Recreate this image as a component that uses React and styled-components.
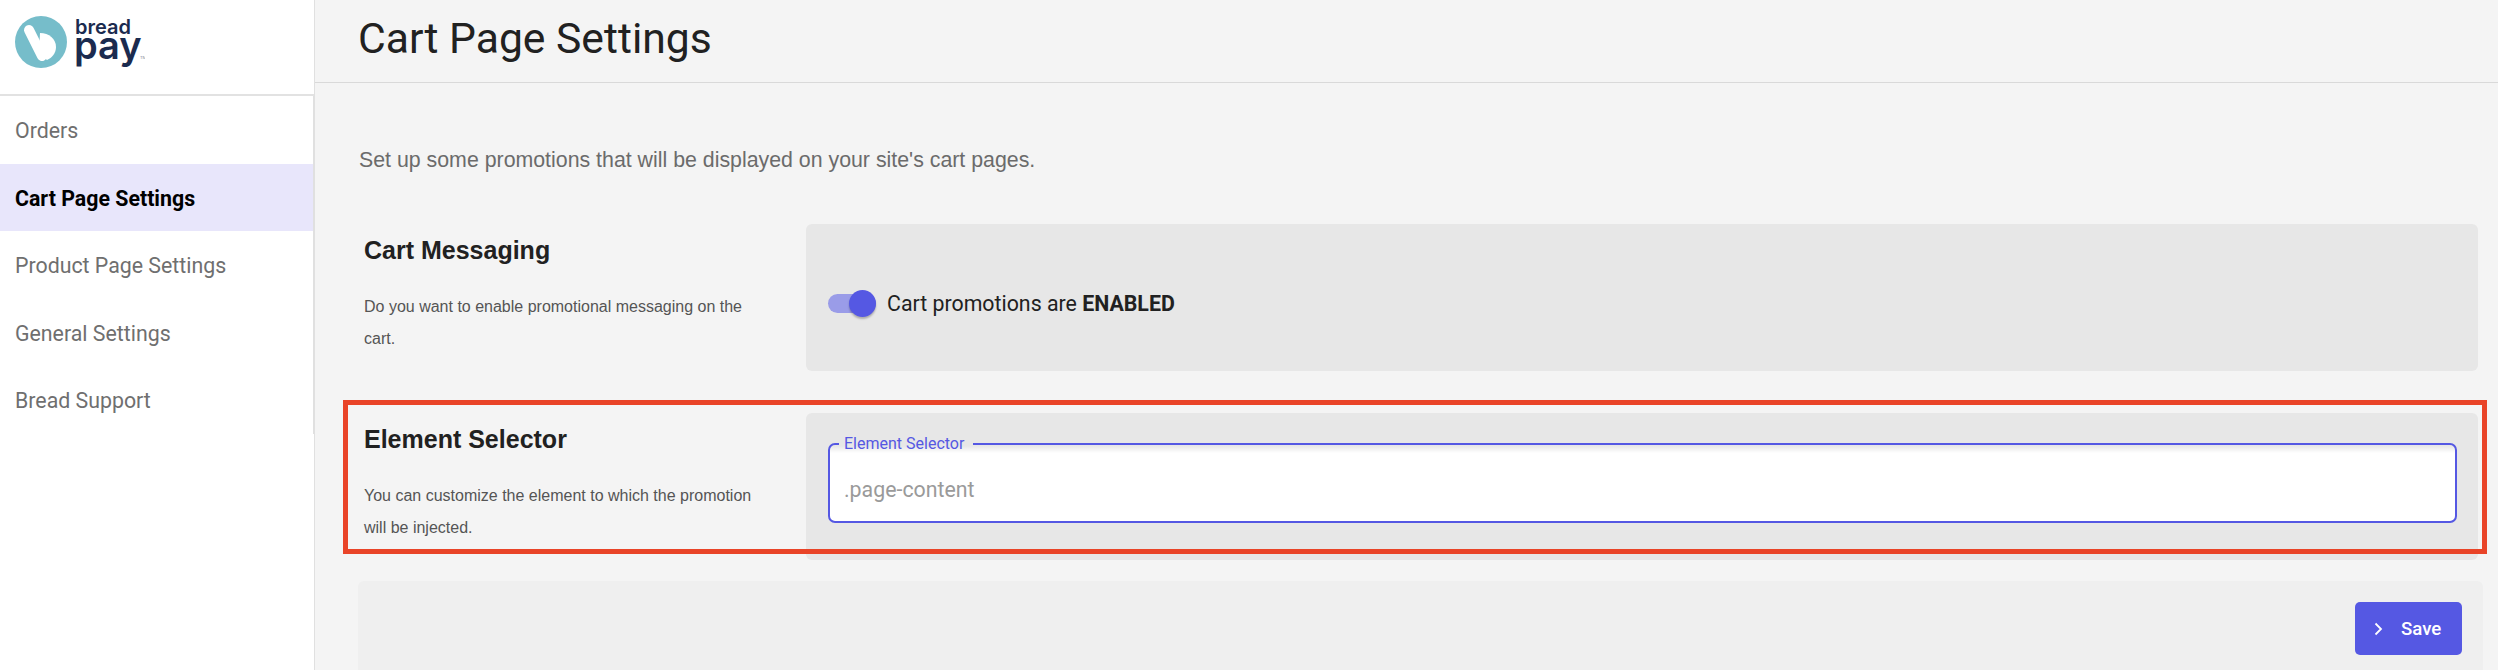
import React from 'react';
import styled, { createGlobalStyle } from 'styled-components';

const GlobalStyle = createGlobalStyle`
  html, body {
    margin: 0;
    padding: 0;
    background: #f4f4f4;
  }
  * {
    box-sizing: border-box;
  }
`;

const Page = styled.div`
  display: flex;
  width: 2498px;
  height: 670px;
  overflow: hidden;
  background: #f4f4f4;
`;

const Sidebar = styled.aside`
  flex: 0 0 315px;
  background: #fff;
  border-right: 1px solid #e0e0e0;
`;

const LogoBox = styled.div`
  height: 96px;
  padding: 16px 0 0 15px;
  border-bottom: 2px solid #e2e2e2;
`;

const Nav = styled.nav`
  height: 338px;
  border-right: 1px solid #e0e0e0;
`;

const NavItem = styled.div`
  display: flex;
  align-items: center;
  height: 67.6px;
  padding: ${p => (p.$active ? '3px' : '1px')} 0 0 15px;
  font-family: Roboto, sans-serif;
  font-size: 21.33px;
  font-weight: ${p => (p.$active ? 700 : 400)};
  color: ${p => (p.$active ? '#000' : '#6f6f6f')};
  background: ${p => (p.$active ? '#e8e6fb' : 'transparent')};
`;

const Main = styled.main`
  flex: 1;
  min-width: 0;
`;

const Header = styled.header`
  display: flex;
  align-items: center;
  height: 83px;
  padding: 0 0 6px 43px;
  border-bottom: 1px solid #d9d9d9;
`;

const Title = styled.h1`
  margin: 0;
  font-family: Roboto, sans-serif;
  font-size: 42.67px;
  font-weight: 400;
  color: #212121;
`;

const Content = styled.div`
  padding: 0 20px 0 44px;
`;

const Intro = styled.p`
  margin: 0;
  padding-top: 64px;
  height: 141px;
  font-family: 'Liberation Sans', Arial, sans-serif;
  font-size: 21.33px;
  line-height: 26px;
  color: #6b6b6b;
`;

const Row = styled.section`
  position: relative;
  display: grid;
  grid-template-columns: 447px 1fr;
  height: 147px;
  margin-bottom: ${p => p.$gap}px;
`;

const RowIntro = styled.div`
  padding: 12px 0 0 5px;
`;

const RowTitle = styled.h2`
  margin: 0 0 27px;
  font-family: 'Liberation Sans', Arial, sans-serif;
  font-size: 25px;
  line-height: 28px;
  font-weight: 700;
  color: #212121;
`;

const RowText = styled.p`
  margin: 0;
  width: 400px;
  font-family: 'Liberation Sans', Arial, sans-serif;
  font-size: 16px;
  line-height: 32px;
  color: #555;
`;

const Panel = styled.div`
  background: #e7e7e7;
  border-radius: 6px;
  padding: ${p => p.$pad};
`;

const ToggleRow = styled.div`
  display: flex;
  align-items: center;
  gap: 11px;
  height: 100%;
  padding-top: 12px;
`;

const Toggle = styled.span`
  position: relative;
  display: block;
  width: 48px;
  height: 19px;
  border-radius: 10px;
  background: #9a9ce8;
`;

const Knob = styled.span`
  position: absolute;
  right: 0;
  top: -4px;
  width: 27px;
  height: 27px;
  border-radius: 50%;
  background: #5558e3;
  box-shadow: 0 2px 2px rgba(0, 0, 0, 0.25);
`;

const ToggleLabel = styled.span`
  font-family: Roboto, sans-serif;
  font-size: 21.33px;
  color: #212121;

  b {
    font-weight: 700;
  }
`;

const Field = styled.fieldset`
  position: relative;
  height: 80px;
  margin: 0;
  padding: 0 14px;
  background: linear-gradient(to bottom, transparent 1px, #fff 8px);
  border: 2px solid #5558e3;
  border-radius: 7px;
`;

const Legend = styled.legend`
  padding: 0 9px 0 5px;
  margin-left: -5px;
  height: 2px;
  font-family: Roboto, sans-serif;
  font-size: 16px;
  line-height: 2px;
  color: #5558e3;
`;

const Placeholder = styled.div`
  padding-top: 33px;
  font-family: Roboto, sans-serif;
  font-size: 21.33px;
  line-height: 24px;
  color: #9a9a9a;
`;

const Highlight = styled.div`
  position: absolute;
  left: -16px;
  top: -13px;
  right: -9px;
  height: 154px;
  border: 5px solid #e94428;
  pointer-events: none;
`;

const Footer = styled.div`
  display: flex;
  justify-content: flex-end;
  height: 120px;
  margin: 0 -5px 0 -1px;
  padding: 21px 21px 0 0;
  background: #efefef;
  border-radius: 6px;
`;

const SaveButton = styled.button`
  display: flex;
  align-items: center;
  gap: 18px;
  width: 107px;
  height: 53px;
  padding: 0 0 0 19px;
  border: 0;
  border-radius: 5px;
  background: #5558e3;
  color: #fff;
  font-family: Roboto, sans-serif;
  font-size: 18.67px;
  font-weight: 500;
`;

const Logo = () => (
  <svg width="130" height="54" viewBox="0 0 130 54">
    <circle cx="26" cy="26" r="26" fill="#76bdca" />
    <path d="M25 17C34 17 41 23 41 31C41 37 37 42 32 44L24 38Z" fill="#fff" />
    <path d="M14 14L27 40" stroke="#fff" strokeWidth="10" strokeLinecap="round" />
    <text x="60" y="18" fontFamily="Inter, sans-serif" fontSize="20" fontWeight="600" fill="#1b2b4f">
      bread
    </text>
    <text x="59" y="43" fontFamily="Inter, sans-serif" fontSize="38" fontWeight="600" fill="#1b2b4f">
      pay
    </text>
    <text x="125" y="43" fontFamily="Inter, sans-serif" fontSize="4" fill="#7d8798">
      TM
    </text>
  </svg>
);

const Chevron = () => (
  <svg width="9" height="14" viewBox="0 0 9 14" fill="none">
    <path d="M1.5 1.5 7 7l-5.500 5.500" stroke="#fff" strokeWidth="1.800" />
  </svg>
);

const navItems = ['Orders', 'Cart Page Settings', 'Product Page Settings', 'General Settings', 'Bread Support'];

export default function App() {
  return (
    <Page>
      <GlobalStyle />
      <Sidebar>
        <LogoBox>
          <Logo />
        </LogoBox>
        <Nav>
          {navItems.map(item => (
            <NavItem key={item} $active={item === 'Cart Page Settings'}>
              {item}
            </NavItem>
          ))}
        </Nav>
      </Sidebar>
      <Main>
        <Header>
          <Title>Cart Page Settings</Title>
        </Header>
        <Content>
          <Intro>Set up some promotions that will be displayed on your site's cart pages.</Intro>
          <Row $gap={42}>
            <RowIntro>
              <RowTitle>Cart Messaging</RowTitle>
              <RowText>Do you want to enable promotional messaging on the cart.</RowText>
            </RowIntro>
            <Panel $pad="0 22px">
              <ToggleRow>
                <Toggle>
                  <Knob />
                </Toggle>
                <ToggleLabel>
                  Cart promotions are <b>ENABLED</b>
                </ToggleLabel>
              </ToggleRow>
            </Panel>
          </Row>
          <Row $gap={21}>
            <RowIntro>
              <RowTitle>Element Selector</RowTitle>
              <RowText>You can customize the element to which the promotion will be injected.</RowText>
            </RowIntro>
            <Panel $pad="30px 21px 0 22px">
              <Field>
                <Legend>Element Selector</Legend>
                <Placeholder>.page-content</Placeholder>
              </Field>
            </Panel>
            <Highlight />
          </Row>
          <Footer>
            <SaveButton>
              <Chevron />
              Save
            </SaveButton>
          </Footer>
        </Content>
      </Main>
    </Page>
  );
}
